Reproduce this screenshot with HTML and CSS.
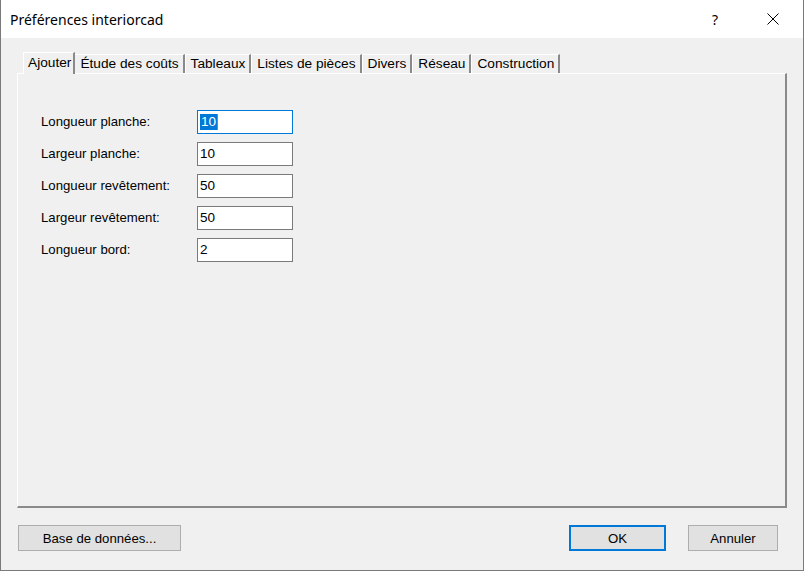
FILE: index.html
```html
<!DOCTYPE html>
<html lang="fr">
<head>
<meta charset="utf-8">
<title>Préférences interiorcad</title>
<link rel="stylesheet" href="styles.css">
</head>
<body>
<div class="window">
  <div class="titlebar">
    <span class="title">Préférences interiorcad</span>
    <span class="help">?</span>
    <span class="close">
      <svg width="12" height="12" viewBox="0 0 12 12"><path d="M0.5 0.5 L11.5 11.5 M11.5 0.5 L0.5 11.5" stroke="#000" stroke-width="1" fill="none"/></svg>
    </span>
  </div>
  <div class="client">
    <div class="tabs">
      <div class="tab active">Ajouter</div>
      <div class="tab">Étude des coûts</div>
      <div class="tab">Tableaux</div>
      <div class="tab">Listes de pièces</div>
      <div class="tab">Divers</div>
      <div class="tab">Réseau</div>
      <div class="tab">Construction</div>
    </div>
    <div class="panel">
      <div class="form">
        <label class="lbl">Longueur planche:</label>
        <div class="field focus"><span class="sel">10</span><span class="caret"></span></div>
        <label class="lbl">Largeur planche:</label>
        <div class="field">10</div>
        <label class="lbl">Longueur revêtement:</label>
        <div class="field">50</div>
        <label class="lbl">Largeur revêtement:</label>
        <div class="field">50</div>
        <label class="lbl">Longueur bord:</label>
        <div class="field">2</div>
      </div>
    </div>
    <div class="buttons">
      <div class="btn db">Base de données...</div>
      <div class="spacer"></div>
      <div class="btn ok">OK</div>
      <div class="btn cancel">Annuler</div>
    </div>
  </div>
</div>
</body>
</html>
```
FILE: styles.css
```css
html, body {
  margin: 0;
  padding: 0;
  background: #f0f0f0;
}
.window {
  width: 804px;
  height: 571px;
  box-sizing: border-box;
  border-left: 1px solid #7a7a7a;
  border-right: 1px solid #7a7a7a;
  border-bottom: 1px solid #7a7a7a;
  background: #f0f0f0;
  display: flex;
  flex-direction: column;
  font-family: "Liberation Sans", Arial, sans-serif;
  color: #000;
}
.titlebar {
  height: 38px;
  background: #fff;
  display: flex;
  align-items: center;
  flex-shrink: 0;
}
.title {
  font-family: "Noto Sans", "Open Sans", sans-serif;
  font-size: 14px;
  margin-left: 9px;
  flex: 1;
}
.help {
  font-family: "Noto Sans", sans-serif;
  font-size: 14px;
  width: 46px;
  text-align: center;
  margin-right: 12px;
}
.close {
  width: 46px;
  display: flex;
  justify-content: center;
  margin-right: 7px;
}
.client {
  flex: 1;
  display: flex;
  flex-direction: column;
}
.tabs {
  display: flex;
  align-items: flex-end;
  margin-top: 14px;
  margin-left: 22px;
  height: 21px;
  position: relative;
  z-index: 2;
}
.tab {
  font-size: 13.7px;
  height: 19px;
  line-height: 18px;
  padding: 0 4px 0 5px;
  box-sizing: border-box;
  border-top: 1px solid #fff;
  border-left: 1px solid #fff;
  border-right: 2px solid #8a8a8a;
  background: #f0f0f0;
  white-space: nowrap;
}
.tab.active {
  height: 22px;
  margin-bottom: -1px;
  line-height: 19px;
  padding: 0 2px 0 4px;
  position: relative;
  margin-right: -1px;
}
.panel {
  margin-left: 16px;
  width: 770px;
  height: 435px;
  box-sizing: border-box;
  border-top: 1px solid #fff;
  border-left: 1px solid #fff;
  border-right: 2px solid #8a8a8a;
  border-bottom: 2px solid #8a8a8a;
  position: relative;
  z-index: 1;
}
.form {
  display: grid;
  grid-template-columns: 156px 96px;
  grid-auto-rows: 24px;
  row-gap: 8px;
  margin-top: 36px;
  margin-left: 23px;
  align-items: center;
}
.lbl {
  font-size: 13.2px;
  line-height: 24px;
}
.field {
  height: 24px;
  box-sizing: border-box;
  border: 1px solid #7a7a7a;
  background: #fff;
  font-size: 13.5px;
  line-height: 22px;
  padding-left: 2px;
  display: flex;
  align-items: center;
}
.field.focus {
  border-color: #0078d7;
}
.sel {
  background: #0078d7;
  color: #fff;
  line-height: 16px;
  padding: 0 1px 0 1px;
}
.caret {
  width: 1px;
  height: 16px;
  background: #e07000;
}
.buttons {
  display: flex;
  margin-top: 17px;
  margin-left: 17px;
  margin-right: 25px;
  height: 26px;
}
.btn {
  font-size: 13.2px;
  height: 26px;
  box-sizing: border-box;
  border: 1px solid #adadad;
  background: #e1e1e1;
  display: flex;
  align-items: center;
  justify-content: center;
}
.btn.db { width: 163px; }
.spacer { flex: 1; }
.btn.ok {
  width: 97px;
  border: 2px solid #0078d7;
  margin-right: 22px;
}
.btn.cancel { width: 90px; }
```
